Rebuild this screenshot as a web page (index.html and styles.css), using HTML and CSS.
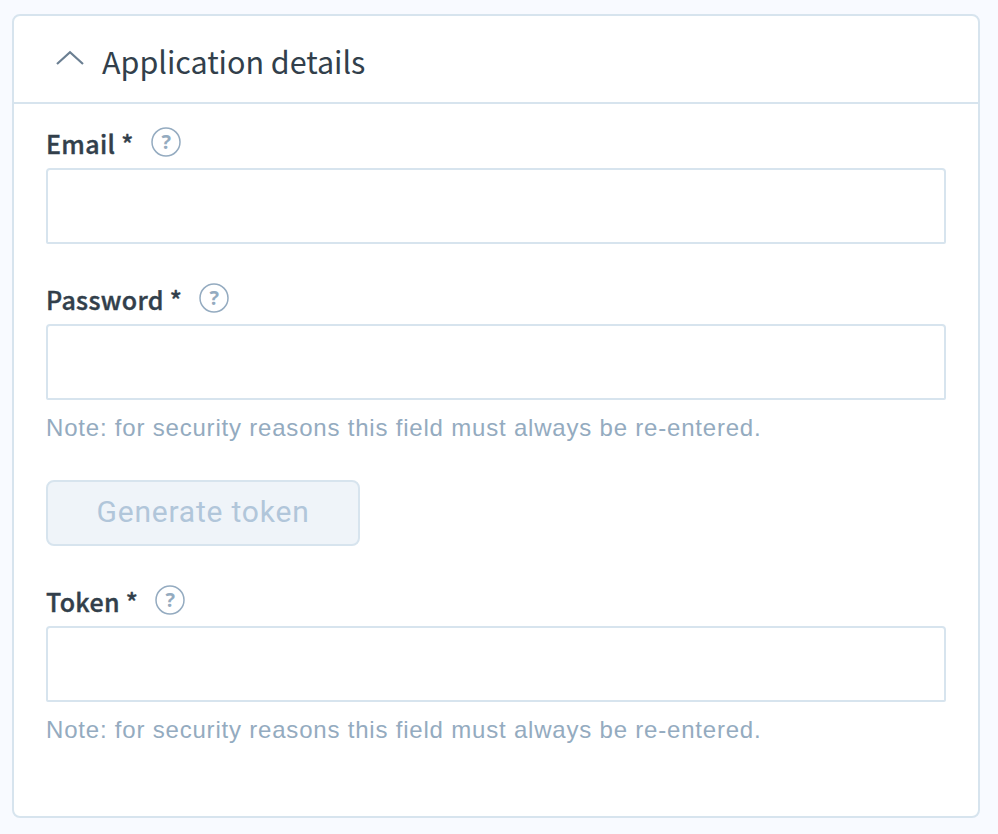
FILE: index.html
```html
<!DOCTYPE html>
<html lang="en">
<head>
<meta charset="utf-8">
<title>Application details</title>
<link rel="stylesheet" href="styles.css">
</head>
<body>
<section class="card">
  <header class="card-header">
    <svg class="chevron" width="28" height="16" viewBox="0 0 28 16" fill="none" stroke="#6b7f92" stroke-width="2.2"><path d="M1 14 14 2.3 27 14"/></svg>
    <h2 class="title"><span>Application details</span></h2>
  </header>
  <form class="card-body">
    <div class="field">
      <div class="label-row"><label class="label" for="email">Email *</label><svg class="help" width="30" height="30" viewBox="0 0 30 30"><circle cx="15" cy="15" r="14"/><text x="15.2" y="22">?</text></svg></div>
      <input class="input" id="email" type="text">
    </div>
    <div class="field">
      <div class="label-row"><label class="label" for="password">Password *</label><svg class="help" width="30" height="30" viewBox="0 0 30 30"><circle cx="15" cy="15" r="14"/><text x="15.2" y="22">?</text></svg></div>
      <input class="input" id="password" type="password">
      <p class="note"><span>Note: for security reasons this field must always be re-entered.</span></p>
    </div>
    <button class="button" type="button" disabled>Generate token</button>
    <div class="field">
      <div class="label-row"><label class="label" for="token">Token *</label><svg class="help" width="30" height="30" viewBox="0 0 30 30"><circle cx="15" cy="15" r="14"/><text x="15.2" y="22">?</text></svg></div>
      <input class="input" id="token" type="text">
      <p class="note"><span>Note: for security reasons this field must always be re-entered.</span></p>
    </div>
  </form>
</section>
</body>
</html>
```
FILE: styles.css
```css
* { box-sizing: border-box; }
body {
  margin: 0;
  padding: 14px 18px 16px 12px;
  background: #f8faff;
  font-family: "Noto Sans CJK SC", "Noto Sans", sans-serif;
  color: #323f4b;
}
.card {
  height: 804px;
  background: #fff;
  border: 2px solid #d7e4ee;
  border-radius: 8px;
}
.card-header {
  display: flex;
  align-items: flex-start;
  gap: 18px;
  height: 88px;
  padding: 0 42px;
  border-bottom: 2px solid #d7e4ee;
}
.chevron { display: block; margin-top: 34px; }
.title {
  margin: 23px 0 0;
  font-size: 30.5px;
  line-height: 44px;
  font-weight: 400;
  letter-spacing: -0.03px;
  white-space: nowrap;
}
.card-body { padding: 20px 32px 0; }
.label-row {
  display: flex;
  align-items: flex-start;
  gap: 17px;
  height: 44px;
}
.label {
  padding-top: 1px;
  font-size: 25px;
  line-height: 36px;
  font-weight: 500;
  letter-spacing: 0.33px;
  -webkit-text-stroke: 0.4px #323f4b;
}
.help {
  display: block;
  margin-top: 3px;
}
.help circle {
  fill: none;
  stroke: #94abc0;
  stroke-width: 1.5px;
}
.help text {
  fill: #94abc0;
  font: 700 20px "Open Sans", sans-serif;
  text-anchor: middle;
}
.input {
  display: block;
  width: 900px;
  height: 76px;
  padding: 0 16px;
  border: 2px solid #d7e4ee;
  border-radius: 4px 4px 2px 2px;
  background: #fff;
  font-size: 25px;
  outline: none;
}
.field + .field { margin-top: 36px; }
.note {
  margin: 14px 0 0;
  font: 24px/28px "Liberation Sans", sans-serif;
  letter-spacing: 0.8px;
  color: #94abc0;
}
.button {
  display: block;
  width: 314px;
  height: 66px;
  margin: 38px 0 36px;
  padding: 0 0 3px;
  border: 2px solid #d7e4ee;
  border-radius: 8px;
  background: #eff4f9;
  color: #b1c6da;
  font: 30px/36px Roboto, sans-serif;
  letter-spacing: 0.8px;
}
```
